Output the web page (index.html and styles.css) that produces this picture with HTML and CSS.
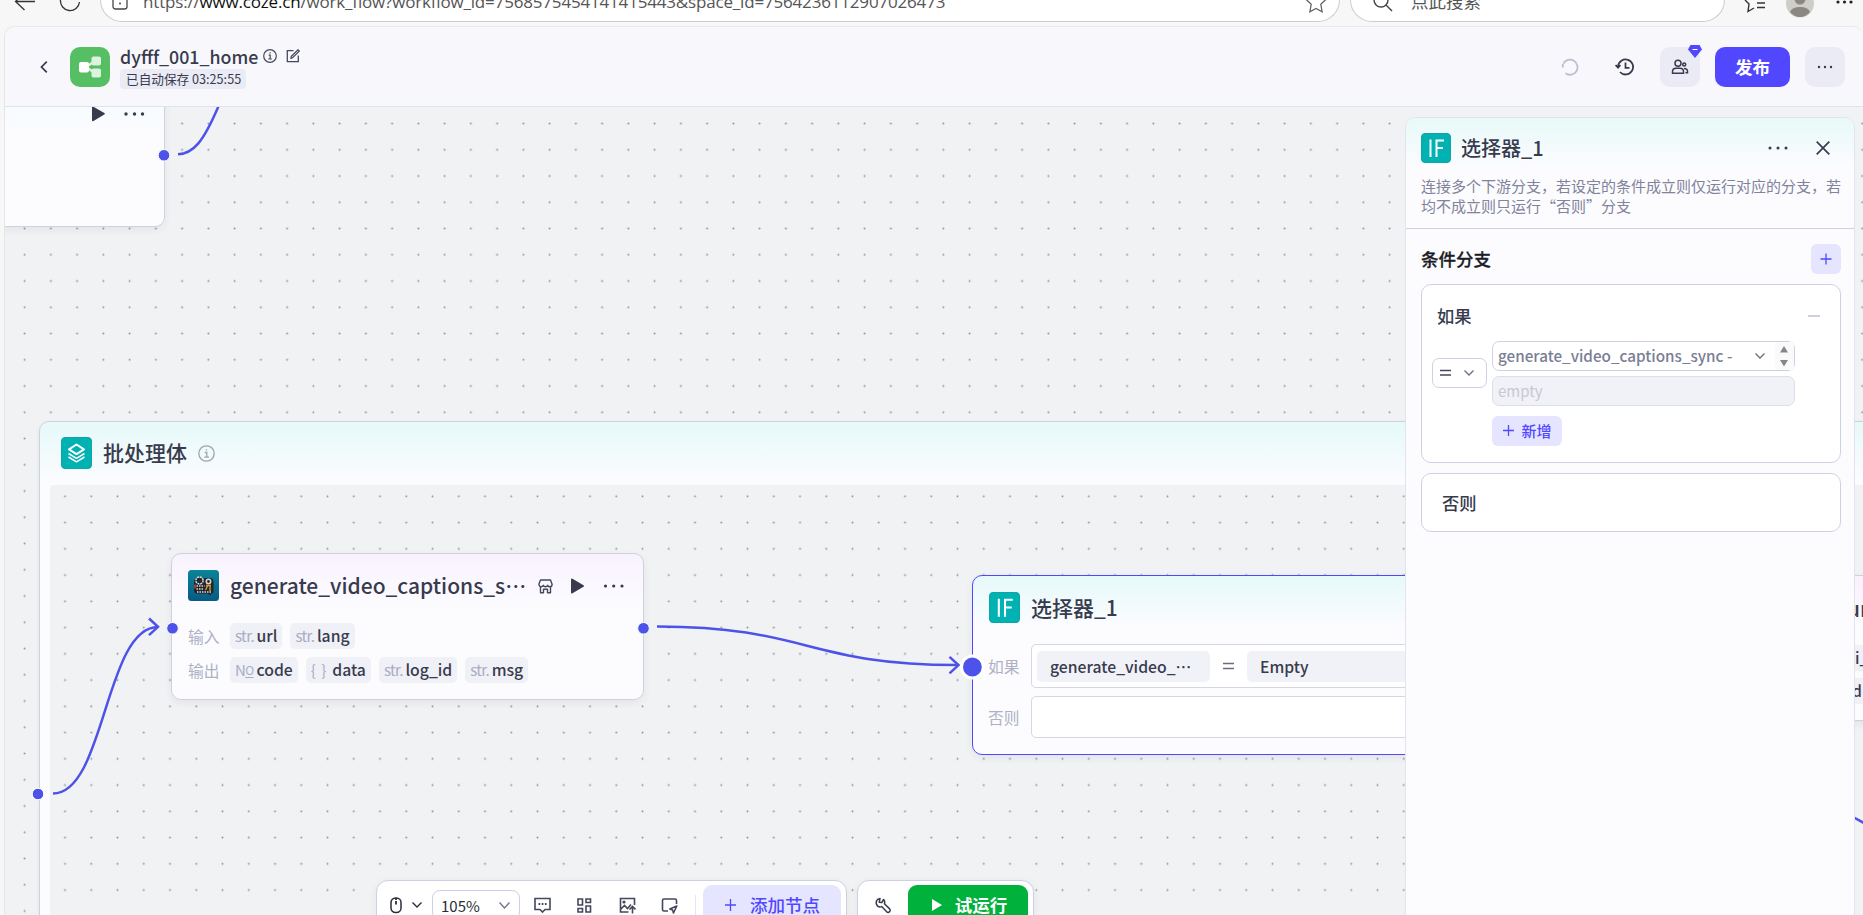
FILE: index.html
```html
<!DOCTYPE html>
<html lang="zh-CN">
<head>
    <meta charset="UTF-8">
    <meta name="viewport" content="width=device-width, initial-scale=1.0">
    <title>dyfff_001_home</title>
    <link rel="stylesheet" href="styles.css">
</head>
<body>
    <div class="browser-bar">
        <svg class="browser-nav" width="100" height="22" viewBox="0 0 100 22" fill="none" stroke="#333" stroke-width="1.3">
            <path d="M35 1.5H16M25-8l-9.500 9.500 9 8.500"/>
            <path d="M60.500 0a9.500 9.500 0 0 0 19 2"/>
        </svg>
        <div class="address">
            <svg width="16" height="22" viewBox="0 0 16 22" fill="none" stroke="#444" stroke-width="1.300"><rect x="1" y="-6" width="14" height="15" rx="2.500"/><circle cx="8" cy="3.500" r="1" fill="#444" stroke="none"/></svg>
            <span class="url">https://<b>www.coze.cn</b>/work_flow?workflow_id=7568575454141415443&amp;space_id=7564236112907026473</span>
            <svg class="star" width="22" height="22" viewBox="0 0 22 22" fill="none" stroke="#666" stroke-width="1.300"><path d="M11-8l3 6.500 7 .8-5.200 5 1.300 7.500-6.100-3.300-6.100 3.300 1.300-7.500-5.200-5 7-.8z"/></svg>
        </div>
        <div class="search">
            <svg width="20" height="22" viewBox="0 0 20 22" fill="none" stroke="#444" stroke-width="1.400"><circle cx="8" cy="0" r="7"/><path d="M13 5l6 6"/></svg>
            <span>点此搜索</span>
        </div>
        <svg class="browser-tools" width="138" height="22" viewBox="1725 0 138 22" fill="none" stroke="#333" stroke-width="1.400">
            <path d="M1745 0l4 4-1 7.500 6-3.500M1757 3h8M1757 7.500h8"/>
            <g stroke="none"><circle cx="1800" cy="3.500" r="14" fill="#cfcdca"/><circle cx="1800" cy="-1" r="5.500" fill="#8a8682"/><path d="M1790 12q2-5 10-5t10 5q-4 5-10 5t-10-5" fill="#8a8682"/></g>
            <g fill="#222" stroke="none"><circle cx="1838" cy="2" r="1.600"/><circle cx="1844.500" cy="2" r="1.600"/><circle cx="1851" cy="2" r="1.600"/></g>
        </svg>
    </div>

    <div class="app">
        <header class="header">
            <svg class="back" width="8" height="12" viewBox="0 0 8 12" fill="none" stroke="#383b4d" stroke-width="1.700"><path d="M6.800.7L1.500 6l5.300 5.300"/></svg>
            <svg class="logo" width="40" height="40" viewBox="0 0 40 40">
                <rect width="40" height="40" rx="10" fill="#57bf63"/>
                <path d="M16 20l9-6M16 20l9 6" stroke="#ddf2df" stroke-width="2.500"/>
                <rect x="21.500" y="9.500" width="9.500" height="9" rx="2" fill="#ddf2df"/>
                <rect x="21.500" y="21.500" width="9.500" height="9" rx="2" fill="#ddf2df"/>
                <rect x="9" y="15" width="10" height="10.500" rx="2" fill="#fff"/>
            </svg>
            <div class="project">
                <div class="project-name">
                    <span>dyfff_001_home</span>
                    <svg width="14" height="14" viewBox="0 0 14 14" fill="none" stroke="#45485c" stroke-width="1.200"><circle cx="7" cy="7" r="6.300"/><path d="M5.700 6.200H7.200V10M5.300 10h3.600M6.500 3.900h1.200"/></svg>
                    <svg class="edit" width="14" height="14" viewBox="0 0 14 14" fill="none" stroke="#45485c" stroke-width="1.300"><path d="M7.500 1.700H1.300v11h11V6.500M5 9.300l.3-2L12 .8l1.300 1.300-6.700 6.700z"/></svg>
                </div>
                <span class="saved">已自动保存 03:25:55</span>
            </div>
            <div class="header-actions">
                <svg class="undo" width="18" height="18" viewBox="0 0 18 18" fill="none" stroke="#bbbed2" stroke-width="1.800"><path d="M2.400 5.700A7.500 7.500 0 1 1 4.500 15.200M1.800 9.500V6"/></svg>
                <svg class="history" width="20" height="18" viewBox="0 0 20 18" fill="none" stroke="#383b4d" stroke-width="1.800"><path d="M3.100 8.500A7.500 7.500 0 1 1 5 14M.6 7l2.500 2.600L5.400 7M10.500 4.500v5.300h4"/></svg>
                <button class="icon-btn people">
                    <svg width="18" height="16" viewBox="0 0 18 16" fill="none" stroke="#383b4d" stroke-width="1.500"><circle cx="7" cy="4.300" r="3"/><path d="M1.500 14.200v-1.400c0-2.500 1.700-3.500 3.500-3.500h4c1.800 0 3.500 1 3.500 3.500v1.400z"/><circle cx="13.200" cy="5.500" r="1.500"/><path d="M13 9.500c2 0 3.500 1 3.500 3v1.300h-2"/></svg>
                    <svg class="gem" width="14" height="13" viewBox="0 0 14 13"><path d="M2.500 0h9L14 4.500 7 13 0 4.500z" fill="#5147ff"/><path d="M4.500 4.500h5" stroke="#fff" stroke-width="1.200"/></svg>
                </button>
                <button class="publish">发布</button>
                <button class="icon-btn"><svg width="16" height="4" viewBox="0 0 16 4" fill="#383b4d"><circle cx="2" cy="2" r="1.200"/><circle cx="8" cy="2" r="1.200"/><circle cx="14" cy="2" r="1.200"/></svg></button>
            </div>
        </header>

        <main class="canvas">
            <svg class="grid" width="1858" height="808">
                <defs><pattern id="dots" x="6.500" y="3.400" width="26.250" height="26.250" patternUnits="userSpaceOnUse"><circle cx="13.125" cy="13.125" r=".95" fill="#8f9094"/></pattern></defs>
                <rect width="1858" height="808" fill="url(#dots)"/>
            </svg>

            <section class="node node-prev">
                <svg width="60" height="18" viewBox="90 105 60 18" fill="#383b4d"><path d="M92 107.500q0-1.500 1.500-.7l10.800 6.200q1.200.8 0 1.600l-10.800 6.400q-1.500.7-1.500-.8z"/><circle cx="126" cy="114" r="1.700"/><circle cx="134.500" cy="114" r="1.700"/><circle cx="142.500" cy="114" r="1.700"/></svg>
            </section>

            <section class="batch">
                <div class="batch-head">
                    <svg width="31" height="32" viewBox="0 0 31 32"><rect x=".5" y=".5" width="30" height="31" rx="3.500" fill="#00b2b2" stroke="#12a3a6"/><g fill="none" stroke="#fff" stroke-width="1.500" stroke-linejoin="round"><path d="M15.500 7.500l7.500 4.800-7.500 4.800L8 12.300z" stroke-width="2"/><path d="M7.500 16.500l8 4.800 8-4.800M7.500 20l8 4.800 8-4.800"/></g></svg>
                    <h2>批处理体</h2>
                    <svg width="17" height="17" viewBox="0 0 17 17" fill="none" stroke="#a2a4ac" stroke-width="1.300"><circle cx="8.500" cy="8.500" r="7.700"/><path d="M6.800 7.500h2v4.700M6.300 12.200h4.700M7.800 4.800h1.400"/></svg>
                </div>
                <div class="batch-body">
                    <svg class="grid" width="1815" height="430">
                        <defs><pattern id="inner-dots" x="1.900" y="-1.800" width="26.250" height="26.250" patternUnits="userSpaceOnUse"><circle cx="13.125" cy="13.125" r=".95" fill="#8f9094"/></pattern></defs>
                        <rect width="1815" height="430" fill="url(#inner-dots)"/>
                    </svg>
                </div>
            </section>

            <section class="node node-captions">
                <div class="node-head">
                    <svg width="31" height="31" viewBox="0 0 31 31">
                        <defs><linearGradient id="teal" x2="0" y2="1"><stop stop-color="#0a8398"/><stop offset="1" stop-color="#075a85"/></linearGradient></defs>
                        <rect width="31" height="31" rx="3.500" fill="url(#teal)"/>
                        <path d="M6 12q0-4 4-4h12q3.500 0 3.500 4v10q0 1.500-3 1.500l.5 2-4-2H9q-3 0-3-3z" fill="#24262b"/>
                        <g fill="none" stroke="#d5d8d6" stroke-width="1.500"><circle cx="11.500" cy="10.500" r="3.600" stroke-dasharray="2 .8"/><circle cx="20.500" cy="11.500" r="2.200"/><path d="M8.500 16h8M8.500 19h7M9 22h15" stroke-dasharray="1.500 1"/></g>
                        <path d="M18 15.500h5M17.500 20l2-4M22 15.500v5.500" stroke="#d69a2d" stroke-width="1.400"/><path d="M7 14.500v4" stroke="#c6573f" stroke-width="1.300"/>
                    </svg>
                    <h2>generate_video_captions_s…</h2>
                    <svg class="node-tools" width="86" height="20" viewBox="538 576 86 20">
                        <g fill="none" stroke="#45485c" stroke-width="1.400" stroke-linejoin="round"><path d="M540.500 580h10l1.600 4.300q0 2.500-2.200 2.500t-2.200-1.500q-.5 1.500-2.200 1.500t-2.200-1.500q-.5 1.500-2.200 1.500t-2.200-2.500zM540.500 587v5.800h3v-3.500h4v3.500h3V587"/></g>
                        <path d="M571 579.500q0-1.500 1.500-.7l11 6.400q1.200.8 0 1.600l-11 6.400q-1.500.7-1.500-.8z" fill="#383b4d"/>
                        <g fill="#383b4d"><circle cx="605.500" cy="586" r="1.600"/><circle cx="613.700" cy="586" r="1.600"/><circle cx="622" cy="586" r="1.600"/></g>
                    </svg>
                </div>
                <div class="params">
                    <span class="label">输入</span>
                    <span class="tag"><i>str.</i>url</span>
                    <span class="tag"><i>str.</i>lang</span>
                </div>
                <div class="params">
                    <span class="label">输出</span>
                    <span class="tag"><i class="num">N<u>O</u></i>code</span>
                    <span class="tag"><i class="obj">{ }</i>data</span>
                    <span class="tag"><i>str.</i>log_id</span>
                    <span class="tag"><i>str.</i>msg</span>
                </div>
            </section>

            <section class="node node-if">
                <div class="node-head">
                    <svg width="31" height="31" viewBox="0 0 30 30"><rect x=".5" y=".5" width="29" height="29" rx="3.500" fill="#00b2b2" stroke="#12a3a6"/><path d="M9.500 6.500v17.500M15.500 24V7.500h7.500M15.500 15h6.500" fill="none" stroke="#fff" stroke-width="2"/></svg>
                    <h2>选择器_1</h2>
                </div>
                <div class="branch">
                    <span class="label">如果</span>
                    <div class="branch-box"><span class="operand">generate_video_…</span><svg width="11" height="8" viewBox="0 0 11 8"><path d="M0 1.500h11M0 6.500h11" stroke="#6b6e82" stroke-width="1.500"/></svg><span class="operand">Empty</span></div>
                </div>
                <div class="branch">
                    <span class="label">否则</span>
                    <div class="branch-box"></div>
                </div>
            </section>

            <section class="node node-next">
                <h2>ur</h2>
                <span class="tag">i_</span>
                <span class="tag">d</span>
            </section>

            <svg class="edges" width="1858" height="808" viewBox="5 107 1858 808" fill="none" stroke="#4d53e8" stroke-width="2.500">
                <path d="M178 154.300C193 153.500 203 143 219 105"/>
                <path d="M53 793.500C105 793.500 105 627 158 627"/>
                <path d="M149 618.500l9 8.300-9 8.300"/>
                <path d="M657 626.500C807 626.500 807 665 957 665"/>
                <path d="M949.500 656.800l9 8.300-9 8.300"/>
                <path d="M1853 817l11 6"/>
                <g fill="#4d53e8" stroke="#fff" stroke-width="1">
                    <circle cx="164" cy="155.300" r="5.800"/>
                    <circle cx="38" cy="794" r="5.800"/>
                    <circle cx="172.500" cy="628.300" r="5.800"/>
                    <circle cx="643.500" cy="628.300" r="5.800"/>
                    <circle cx="972.400" cy="667" r="10.900" stroke-width="3"/>
                </g>
            </svg>

            <aside class="panel">
                <div class="panel-head">
                    <div class="panel-title">
                        <svg width="30" height="30" viewBox="0 0 30 30"><rect x=".5" y=".5" width="29" height="29" rx="3.500" fill="#00b2b2" stroke="#12a3a6"/><path d="M9.500 6.500v17.500M15.500 24V7.500h7.500M15.500 15h6.500" fill="none" stroke="#fff" stroke-width="2"/></svg>
                        <h3>选择器_1</h3>
                        <svg class="panel-tools" width="62" height="14" viewBox="1768 141 62 14"><g fill="#383b4d"><circle cx="1770" cy="148" r="1.500"/><circle cx="1778" cy="148" r="1.500"/><circle cx="1786" cy="148" r="1.500"/></g><path d="M1816.700 141.700l12.600 12.600M1829.300 141.700l-12.600 12.600" stroke="#383b4d" stroke-width="1.700"/></svg>
                    </div>
                    <p>连接多个下游分支，若设定的条件成立则仅运行对应的分支，若均不成立则只运行“否则”分支</p>
                </div>
                <div class="panel-body">
                    <div class="section-title">
                        <h4>条件分支</h4>
                        <button class="add"><svg width="12" height="12" viewBox="0 0 12 12"><path d="M6 .5v11M.5 6h11" stroke="#5147ff" stroke-width="1.300"/></svg></button>
                    </div>
                    <div class="card">
                        <div class="card-title"><span>如果</span><svg width="12" height="4" viewBox="0 0 12 4"><path d="M0 2h12" stroke="#b3b6cc" stroke-width="1.300"/></svg></div>
                        <div class="condition">
                            <div class="operator">
                                <svg width="11" height="8" viewBox="0 0 11 8"><path d="M0 1.500h11M0 6h11" stroke="#45485c" stroke-width="1.300"/></svg>
                                <svg width="10" height="6" viewBox="0 0 10 6"><path d="M.5.500L5 5 9.500.500" fill="none" stroke="#6b6e82" stroke-width="1.300"/></svg>
                            </div>
                            <div class="operands">
                                <div class="variable">
                                    <span>generate_video_captions_sync -</span>
                                    <svg width="10" height="6" viewBox="0 0 10 6"><path d="M.5.500L5 5 9.500.500" fill="none" stroke="#6b6e82" stroke-width="1.300"/></svg>
                                    <div class="spinner"><svg width="8" height="20" viewBox="0 0 8 20" fill="#85868a"><path d="M4 0l4 6.500H0zM4 20.500l4-6.500H0z"/></svg></div>
                                </div>
                                <div class="value">empty</div>
                                <button class="append"><svg width="11" height="11" viewBox="0 0 11 11"><path d="M5.500 0v11M0 5.500h11" stroke="#5147ff" stroke-width="1.300"/></svg>新增</button>
                            </div>
                        </div>
                    </div>
                    <div class="card card-else">否则</div>
                </div>
            </aside>

            <div class="toolbar">
                <div class="tools">
                    <svg class="mouse" width="12" height="17" viewBox="0 0 12 17" fill="none" stroke="#2b2d38" stroke-width="1.500"><rect x="1" y="1" width="10" height="14.500" rx="4.500"/><path d="M6 1v2M6 4v3.500" stroke-width="1.800"/></svg>
                    <svg class="caret" width="10" height="6" viewBox="0 0 10 6"><path d="M.5.500L5 5 9.500.500" fill="none" stroke="#2b2d38" stroke-width="1.400"/></svg>
                    <div class="zoom">105%<svg width="11" height="7" viewBox="0 0 11 7"><path d="M.5.500L5.500 6l5-5.500" fill="none" stroke="#74778e" stroke-width="1.400"/></svg></div>
                    <svg class="tool" width="17" height="17" viewBox="0 0 17 17" fill="none" stroke="#45485c" stroke-width="1.600"><path d="M1 1.500h15v11h-5L8.500 15 6 12.500H1z"/><path d="M4.500 7h1.700M7.700 7h1.700M10.900 7h1.700" stroke-width="1.900"/></svg>
                    <svg class="tool" width="17" height="17" viewBox="0 0 17 17" fill="none" stroke="#45485c" stroke-width="1.600"><path d="M2 2h4.500v6H2zM10 2h4.500v3.500H10zM2 11.500h4.500V15H2zM10 9h4.500v6H10z"/></svg>
                    <svg class="tool" width="17" height="17" viewBox="0 0 17 17" fill="none" stroke="#45485c" stroke-width="1.600"><path d="M9.500 15H1.500V1.500h14V8M1.500 12.500l4-4 3 3 3.500-4M13.500 16.500V10M10.500 12.500l3-3 3 3"/><circle cx="5" cy="5" r=".8"/></svg>
                    <svg class="tool" width="17" height="17" viewBox="0 0 17 17" fill="none" stroke="#45485c" stroke-width="1.600"><path d="M7 14H3q-1.500 0-1.500-1.500v-9Q1.500 2 3 2h11q1.500 0 1.500 1.500V7M15.800 9l-7 3 2.800 1 .9 3z" stroke-linejoin="round"/></svg>
                    <span class="divider"></span>
                    <button class="add-node"><svg width="11" height="12" viewBox="0 0 11 12"><path d="M5.500 0v12M0 6h11" stroke="#5147ff" stroke-width="1.300"/></svg>添加节点</button>
                </div>
                <div class="run-tools">
                    <svg width="17" height="17" viewBox="0 0 17 17" fill="none" stroke="#383b4d" stroke-width="1.500" stroke-linejoin="round"><path d="M5 1.500a4.200 4.200 0 0 0-3.500 5.700A4.200 4.200 0 0 0 6.700 9.600l5 5.200q1.500 1.200 2.800-.1t.1-2.800L9.400 6.800A4.200 4.200 0 0 0 8.600 2.500L6.800 5.500 4.200 5.300z"/></svg>
                    <button class="run"><svg width="10" height="12" viewBox="0 0 10 12"><path d="M0 0l10 6-10 6z" fill="#fff"/></svg>试运行</button>
                </div>
            </div>
        </main>
    </div>
</body>
</html>
```
FILE: styles.css
```css
* {
    margin: 0;
    padding: 0;
    box-sizing: border-box;
}

body {
    font-family: "Noto Sans CJK SC", "Noto Sans", sans-serif;
    background: #f7f7f7;
    color: #383b4d;
    height: 100vh;
    overflow: hidden;
    display: flex;
    flex-direction: column;
}

svg {
    display: block;
    flex-shrink: 0;
}

button {
    font-family: inherit;
    border: none;
    display: flex;
    align-items: center;
    justify-content: center;
}

/* browser strip */
.browser-bar {
    display: flex;
    height: 26px;
    flex-shrink: 0;
}

.address,
.search {
    height: 22px;
    background: #fff;
    border: 1px solid #ccc;
    border-top: none;
    border-radius: 0 0 22px 22px;
    display: flex;
    white-space: nowrap;
    overflow: hidden;
    line-height: 22px;
}

.address {
    width: 1240px;
    padding: 0 12px 0 11px;
}

.url {
    font: 17px/22px "Open Sans", sans-serif;
    color: #555;
    margin: -9px 0 0 15px;
    letter-spacing: -0.18px;
}

.url b {
    font-weight: 400;
    color: #111;
}

.star {
    margin-left: auto;
}

.search {
    width: 375px;
    margin-left: 10px;
    padding-left: 22px;
    font-size: 17.5px;
    color: #555;
}

.search span {
    margin: -10px 0 0 18px;
}

/* app header */
.app {
    flex: 1;
    margin-left: 5px;
    border-top: 1px solid #e9e9ee;
    border-radius: 10px 10px 0 0;
    box-shadow: -1px 0 0 #e6e6ea;
    display: flex;
    flex-direction: column;
    overflow: hidden;
}

.header {
    height: 80px;
    flex-shrink: 0;
    display: flex;
    align-items: center;
    background: #f7f7fc;
    border-bottom: 1px solid #e0e2ee;
    padding: 0 18px 0 35px;
}

.logo {
    margin: 0 10px 0 22px;
}

.project-name {
    display: flex;
    align-items: center;
    font-size: 17.8px;
    font-weight: 500;
    line-height: 24px;
}

.project-name svg {
    margin-left: 5px;
}

.project-name .edit {
    margin-left: 9px;
}

.saved {
    display: block;
    width: 126px;
    height: 20px;
    padding: 0 6px;
    margin-top: 1px;
    font-size: 12.65px;
    line-height: 20px;
    white-space: nowrap;
    border-radius: 4px;
    background: #ebebf5;
}

.header-actions {
    margin-left: auto;
    display: flex;
    align-items: center;
}

.history {
    margin: 0 25px 0 36px;
}

.icon-btn {
    position: relative;
    width: 40px;
    height: 40px;
    border-radius: 10px;
    background: #ebebf5;
}

.gem {
    position: absolute;
    right: -2px;
    top: -2px;
}

.publish {
    width: 75px;
    height: 40px;
    margin: 0 15px;
    border-radius: 10px;
    background: #5147ff;
    color: #fff;
    font-size: 17.5px;
    font-weight: 700;
}

/* canvas */
.canvas {
    position: relative;
    flex: 1;
    background: #f1f2f4;
    overflow: hidden;
}

.grid,
.edges {
    position: absolute;
    left: 0;
    top: 0;
}

.node {
    position: absolute;
    border: 1px solid #cfd1e2;
    border-radius: 10px;
    background: #fcfcff;
    box-shadow: 0 3px 8px rgba(0, 0, 0, 0.06);
}

h2 {
    font-size: 21px;
    font-weight: 500;
    line-height: 32px;
    white-space: nowrap;
}

.node-prev {
    left: -150px;
    top: -60px;
    width: 310px;
    height: 180px;
    background: linear-gradient(#e9faf9, #fcfcff 84px);
    padding: 57px 14px 0;
}

.node-prev svg {
    margin-left: auto;
}

.batch {
    position: absolute;
    left: 34px;
    top: 314px;
    width: 1900px;
    height: 560px;
    border: 1px solid #cfd1e2;
    border-radius: 10px;
    background: linear-gradient(#e6f9f9, #fcfcff 62px);
    box-shadow: 0 2px 6px rgba(0, 0, 0, 0.05);
    padding-left: 10px;
}

.batch-head {
    display: flex;
    align-items: center;
    height: 63px;
    padding: 0 0 1px 11px;
}

.batch-head h2 {
    margin: -2px 11px 0 11px;
}

.batch-body {
    position: relative;
    height: 490px;
    border-radius: 4px;
    background: #f1f2f4;
}

.node-captions {
    left: 166px;
    top: 446px;
    width: 473px;
    height: 147px;
    padding: 16px 14px 16px 16px;
    background: linear-gradient(#f9f2fe, #fcfcff 55px);
}

.node-head {
    display: flex;
    align-items: center;
    height: 31px;
}

.node-head h2 {
    margin: -2px 0 0 11px;
}

.node-tools {
    margin-left: auto;
    margin-right: 5px;
}

.params {
    display: flex;
    align-items: center;
    gap: 8px;
    height: 26px;
    margin-top: 8px;
}

.node-head + .params {
    margin-top: 22px;
}

.label {
    width: 34px;
    font-size: 15.75px;
    color: #aeb1c5;
    flex-shrink: 0;
}

.tag {
    display: flex;
    align-items: center;
    height: 26px;
    padding: 0 5px;
    border-radius: 5px;
    background: #f0f0f7;
    font-size: 15.75px;
    font-weight: 500;
    line-height: 26px;
}

.tag i {
    width: 21.5px;
    font-style: normal;
    font-weight: 400;
    font-size: 15px;
    letter-spacing: -0.6px;
    color: #a9acc4;
    white-space: nowrap;
}

.tag .num u {
    font-size: 12px;
    text-underline-offset: 2px;
    vertical-align: 1px;
}

.tag .obj {
    letter-spacing: 0;
    word-spacing: 2px;
}

.node-if {
    left: 967px;
    top: 468px;
    width: 473px;
    height: 180px;
    border-color: #5147ff;
    padding: 16px 16px;
    background: linear-gradient(#e6f9f9, #fcfcff 52px);
}

.branch {
    display: flex;
    align-items: center;
    margin-top: 8px;
}

.node-head + .branch {
    margin-top: 21px;
}

.branch .label {
    width: 43px;
    margin-left: -1px;
}

.branch-box {
    flex: 1;
    height: 42px;
    display: flex;
    align-items: center;
    border: 1px solid #d5d7e5;
    border-radius: 5px;
    background: #fff;
    padding: 0 5px;
}

.node-head + .branch .branch-box {
    height: 44px;
}

.operand {
    width: 173px;
    height: 31px;
    padding-left: 13px;
    border-radius: 5px;
    background: #f1f2f8;
    font-size: 15.75px;
    font-weight: 500;
    line-height: 31px;
}

.branch-box svg {
    margin: 0 13px;
}

.node-next {
    left: 1695px;
    top: 468px;
    width: 473px;
    height: 146px;
    padding: 16px 0 0 146px;
    background: linear-gradient(#fbeffc, #fcfcff 50px);
}

.node-next .tag {
    margin: 21px 0 0 -2px;
    padding-left: 10px;
}

.node-next .tag + .tag {
    margin-top: 7px;
    padding-left: 7px;
}

/* side panel */
.panel {
    position: absolute;
    left: 1400px;
    top: 10px;
    width: 450px;
    height: 820px;
    border: 1px solid #e2e3ee;
    border-radius: 10px;
    background: #fcfcff;
}

.panel-head {
    height: 111px;
    padding: 15px 14px 0 15px;
    border-bottom: 1px solid #ccd0e2;
    border-radius: 9px 9px 0 0;
    background: linear-gradient(#e8f9f8, #fcfcff 50px);
}

.panel-title {
    display: flex;
    align-items: center;
    height: 30px;
}

.panel-title h3 {
    margin: -1px 0 0 10px;
    font-size: 20px;
    font-weight: 500;
    line-height: 30px;
}

.panel-tools {
    margin-left: auto;
    margin-right: 10px;
}

.panel-head p {
    margin-top: 13px;
    width: 421px;
    font-size: 15px;
    line-height: 20px;
    color: #80839b;
}

.panel-body {
    padding: 15px 13px 0 15px;
}

.section-title {
    display: flex;
    align-items: center;
    justify-content: space-between;
    height: 30px;
    color: #1c1d26;
}

.section-title h4 {
    margin-top: -2px;
    font-size: 17.5px;
    font-weight: 500;
    -webkit-text-stroke: 0.3px #1c1d26;
}

.add {
    width: 30px;
    height: 30px;
    border-radius: 6px;
    background: #e5e5ff;
}

.card {
    height: 179px;
    margin-top: 10px;
    padding: 18px 10px 0;
    border: 1px solid #cfd1e2;
    border-radius: 10px;
    background: #fff;
    font-size: 17.3px;
    font-weight: 500;
}

.card-title {
    display: flex;
    align-items: center;
    justify-content: space-between;
    height: 26px;
    padding: 0 10px 0 5px;
}

.card-title span {
    margin-top: -2px;
}

.card-else {
    height: 59px;
    padding: 0 20px;
    line-height: 57px;
}

.condition {
    display: flex;
    margin-top: 12px;
}

.operator {
    display: flex;
    align-items: center;
    justify-content: space-between;
    width: 55px;
    height: 30px;
    margin: 17px 5px 0 0;
    padding: 0 12px 0 7px;
    border: 1px solid #cfd1e2;
    border-radius: 7px;
}

.operands {
    width: 303px;
}

.variable,
.value {
    display: flex;
    align-items: center;
    height: 30px;
    padding-left: 5px;
    border: 1px solid #cfd1e2;
    border-radius: 7px;
    font-size: 15.25px;
    color: #7a7e94;
    white-space: nowrap;
}

.variable span {
    margin-top: -2px;
}

.variable svg {
    margin-left: auto;
}

.variable .spinner {
    width: 19px;
    height: 28px;
    margin-left: 10px;
    padding: 4px 0 0 5px;
    background: #fafafa;
}

.spinner svg {
    margin: 0;
}

.value {
    margin-top: 5px;
    padding-bottom: 2px;
    background: #f1f2f8;
    border-color: #dcdeea;
    color: #c6c8d2;
    font-weight: 400;
    font-size: 15px;
}

.append {
    width: 70px;
    height: 30px;
    margin-top: 10px;
    padding: 0 0 2px 1px;
    gap: 7px;
    border-radius: 6px;
    background: #e5e5ff;
    color: #5147ff;
    font-size: 15px;
    font-weight: 500;
}

/* bottom toolbar */
.toolbar {
    position: absolute;
    left: 371px;
    top: 773px;
    display: flex;
    gap: 10px;
}

.tools,
.run-tools {
    display: flex;
    align-items: center;
    height: 50px;
    border: 1px solid #cdd0e2;
    border-radius: 12px;
    background: #fff;
    box-shadow: 0 2px 8px rgba(0, 0, 0, 0.06);
}

.tools {
    width: 471px;
    padding: 0 5px 0 13px;
}

.caret {
    margin-left: 10px;
}

.zoom {
    display: flex;
    align-items: center;
    justify-content: space-between;
    width: 88px;
    height: 30px;
    margin: 0 14px 0 10px;
    padding: 0 9px 0 8px;
    border: 1px solid #cdd0e2;
    border-radius: 8px;
    font-size: 15px;
    color: #2b2d38;
}

.tool {
    margin-right: 25.3px;
}

.divider {
    width: 1px;
    height: 20px;
    margin: 0 7px 0 -8px;
    background: #e4e5ee;
}

.add-node {
    flex: 1;
    height: 40px;
    padding: 0 0 1px 1px;
    gap: 14px;
    border-radius: 9px;
    background: #e5e5ff;
    color: #5147ff;
    font-size: 17.5px;
    font-weight: 500;
}

.run-tools {
    width: 177px;
    padding: 0 5px 0 17px;
    justify-content: space-between;
}

.run {
    width: 120px;
    height: 40px;
    padding: 0 0 1px 3px;
    gap: 13px;
    border-radius: 9px;
    background: #00b23c;
    color: #fff;
    font-size: 17.5px;
    font-weight: 600;
}
```
